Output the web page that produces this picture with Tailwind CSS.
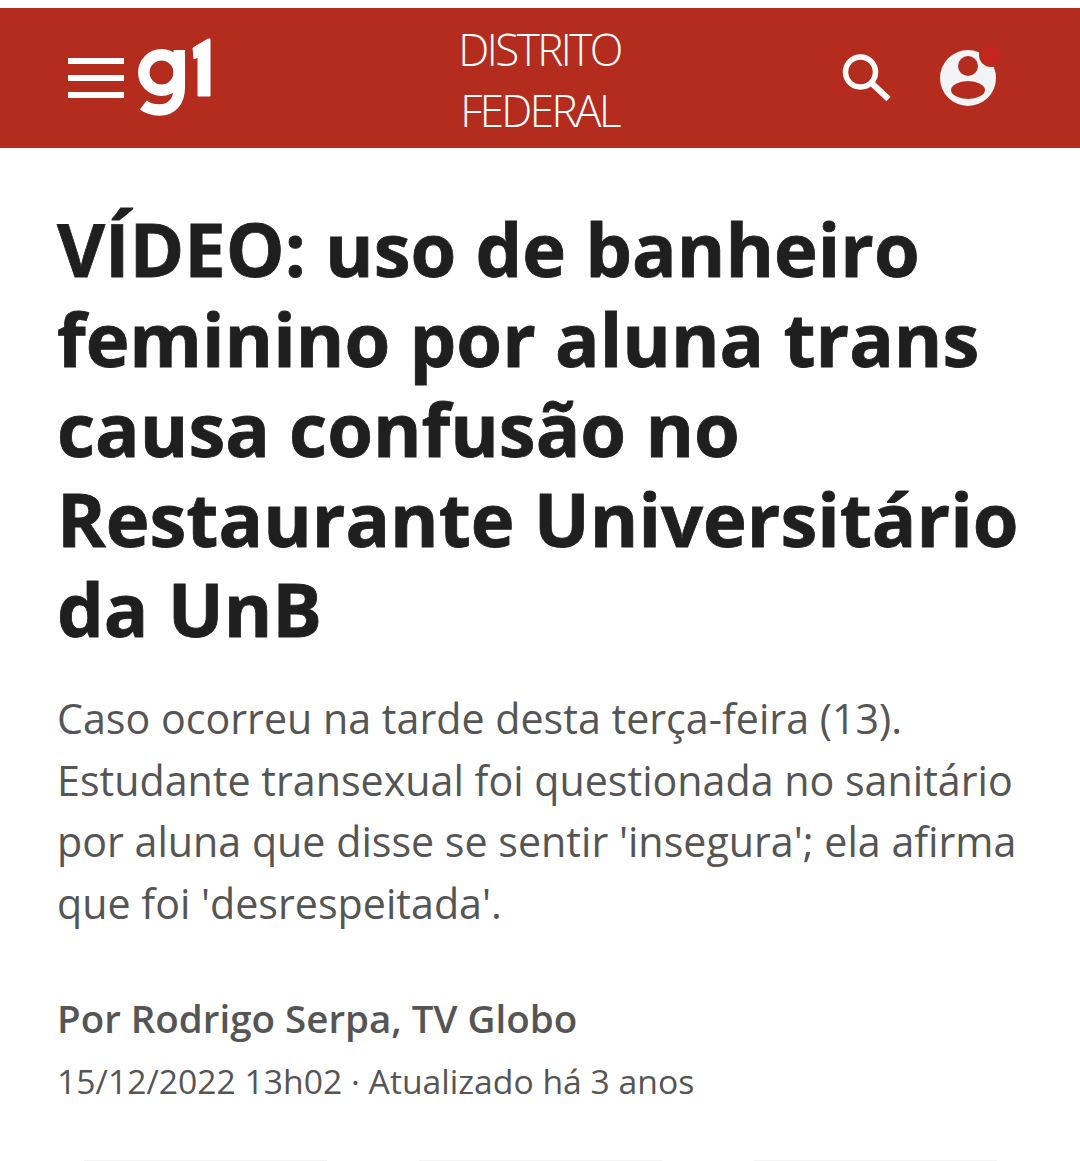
<!doctype html>
<html lang="en">
<head>
  <meta charset="utf-8">
  <meta name="viewport" content="width=device-width, initial-scale=1">
  <title>g1 Distrito Federal</title>
  <script src="https://cdn.jsdelivr.net/npm/@tailwindcss/browser@4"></script>
</head>
<body class="bg-white h-[1161px] overflow-hidden flex flex-col font-['Open_Sans',sans-serif]">

  <header class="mt-2 h-[140px] bg-[#b32c1d] flex items-center pl-[68px] pr-[84px]">
    <button class="flex flex-col gap-[11px] w-14 -mt-[1px]">
      <span class="block h-[6px] bg-white"></span>
      <span class="block h-[6px] bg-white"></span>
      <span class="block h-[6px] bg-white"></span>
    </button>
    <svg class="ml-[14px]" width="76" height="82" viewBox="0 0 76 82" fill="none" stroke="#fff">
      <circle cx="23.5" cy="35.5" r="17.7" stroke-width="11.5"/>
      <path d="M41.3 13v37c0 15-8 23-20 23-7 0-12-2-16-5" stroke-width="11.5"/>
      <path d="M55 11L70 2h2v57H60V20l-4 2z" fill="#fff" stroke-width="1" stroke-linejoin="round"/>
    </svg>
    <div class="flex-1 flex justify-center pl-[24px]">
      <p class="mt-[4px] text-center text-white text-[44px] leading-[61px] font-light tracking-[-2.6px]">DISTRITO<br>FEDERAL</p>
    </div>
    <svg class="-mt-[4px] -ml-[1px]" width="53" height="52" viewBox="0 0 52 52" fill="none" stroke="#fff">
      <circle cx="20" cy="22" r="15" stroke-width="5.5"/>
      <path d="M31 33l17 16" stroke-width="6"/>
    </svg>
    <div class="relative ml-[47px] w-14 h-14 rounded-full bg-[#f1f3f5] flex flex-col items-center">
      <span class="mt-[6px] w-5 h-5 rounded-full bg-[#b32c1d]"></span>
      <span class="mt-[5px] w-[34px] h-[18px] rounded-[50%] bg-[#b32c1d]"></span>
      <span class="absolute -top-[5px] -right-[5px] w-5 h-5 rounded-full bg-[#c4261c] ring-2 ring-[#b32c1d]"></span>
    </div>
  </header>

  <main class="pl-[57px] pr-[50px]">
    <h1 class="mt-[56px] text-[74px] leading-[90px] font-bold text-[#1f1f1f] [-webkit-text-stroke:0.8px_#1f1f1f]">VÍDEO: uso de banheiro feminino por aluna trans causa confusão no Restaurante Universitário da UnB</h1>
    <p class="mt-[34px] text-[41.2px] leading-[61.6px] text-[#555555]">Caso ocorreu na tarde desta terça-feira (13). Estudante transexual foi questionada no sanitário por aluna que disse se sentir 'insegura'; ela afirma que foi 'desrespeitada'.</p>
    <p class="mt-[59px] text-[38.5px] leading-[50px] font-semibold text-[#555555]">Por Rodrigo Serpa, TV Globo</p>
    <p class="mt-[13px] text-[33.7px] leading-[50px] text-[#555555]">15/12/2022 13h02 · Atualizado há 3 anos</p>
  </main>

  <footer class="mt-auto h-px flex pl-[84px] gap-[92px]">
    <span class="w-[243px] bg-[#f3f3f3]"></span>
    <span class="w-[243px] bg-[#f3f3f3]"></span>
    <span class="w-[243px] bg-[#f3f3f3]"></span>
  </footer>

</body>
</html>
